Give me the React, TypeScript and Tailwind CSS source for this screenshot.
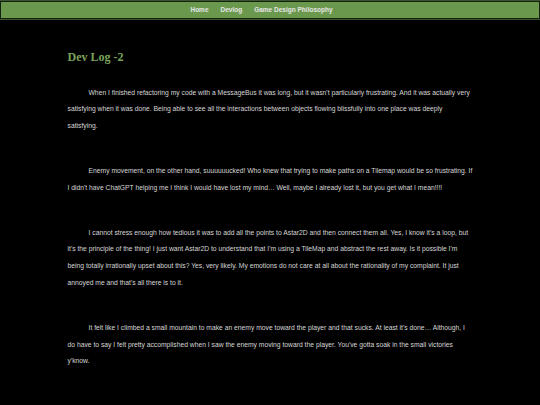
const links = ["Home", "Devlog", "Game Design Philosophy"];

const paragraphs = [
  "When I finished refactoring my code with a MessageBus it was long, but it wasn't particularly frustrating. And it was actually very satisfying when it was done. Being able to see all the interactions between objects flowing blissfully into one place was deeply satisfying.",
  "Enemy movement, on the other hand, suuuuuucked! Who knew that trying to make paths on a Tilemap would be so frustrating. If I didn't have ChatGPT helping me I think I would have lost my mind\u2026 Well, maybe I already lost it, but you get what I mean!!!!",
  "I cannot stress enough how tedious it was to add all the points to Astar2D and then connect them all. Yes, I know it's a loop, but it's the principle of the thing! I just want Astar2D to understand that I'm using a TileMap and abstract the rest away. Is it possible I'm being totally irrationally upset about this? Yes, very likely. My emotions do not care at all about the rationality of my complaint. It just annoyed me and that's all there is to it.",
  "It felt like I climbed a small mountain to make an enemy move toward the player and that sucks. At least it's done\u2026 Although, I do have to say I felt pretty accomplished when I saw the enemy moving toward the player. You've gotta soak in the small victories y'know.",
];

export default function App() {
  return (
    <div className="min-h-screen bg-black font-['Liberation_Sans',Arial,sans-serif]">
      <header className="border-y border-[#3b5530]">
        <nav className="flex h-[18px] items-center justify-center gap-[12px] border border-[#15210f] bg-[#6a994e] pr-[17px]">
          {links.map((l) => (
            <a key={l} href="#" className="text-[6.5px] font-bold leading-none text-[#e6e6e6]">
              {l}
            </a>
          ))}
        </nav>
      </header>

      <main className="px-[67.5px] pb-10">
        <h1 className="mt-[30px] font-['Liberation_Serif',Georgia,serif] text-[12px] font-bold leading-[14px] text-[#7ba35b]">
          Dev Log -2
        </h1>
        <div className="mt-[20.6px]">
          {paragraphs.map((p, i) => (
            <p
              key={i}
              className={`indent-[21px] text-[6.75px] leading-[16.7px] text-[#d6d6d6] ${i > 0 ? "mt-[28.3px]" : ""}`}
            >
              {p}
            </p>
          ))}
        </div>
      </main>
    </div>
  );
}
